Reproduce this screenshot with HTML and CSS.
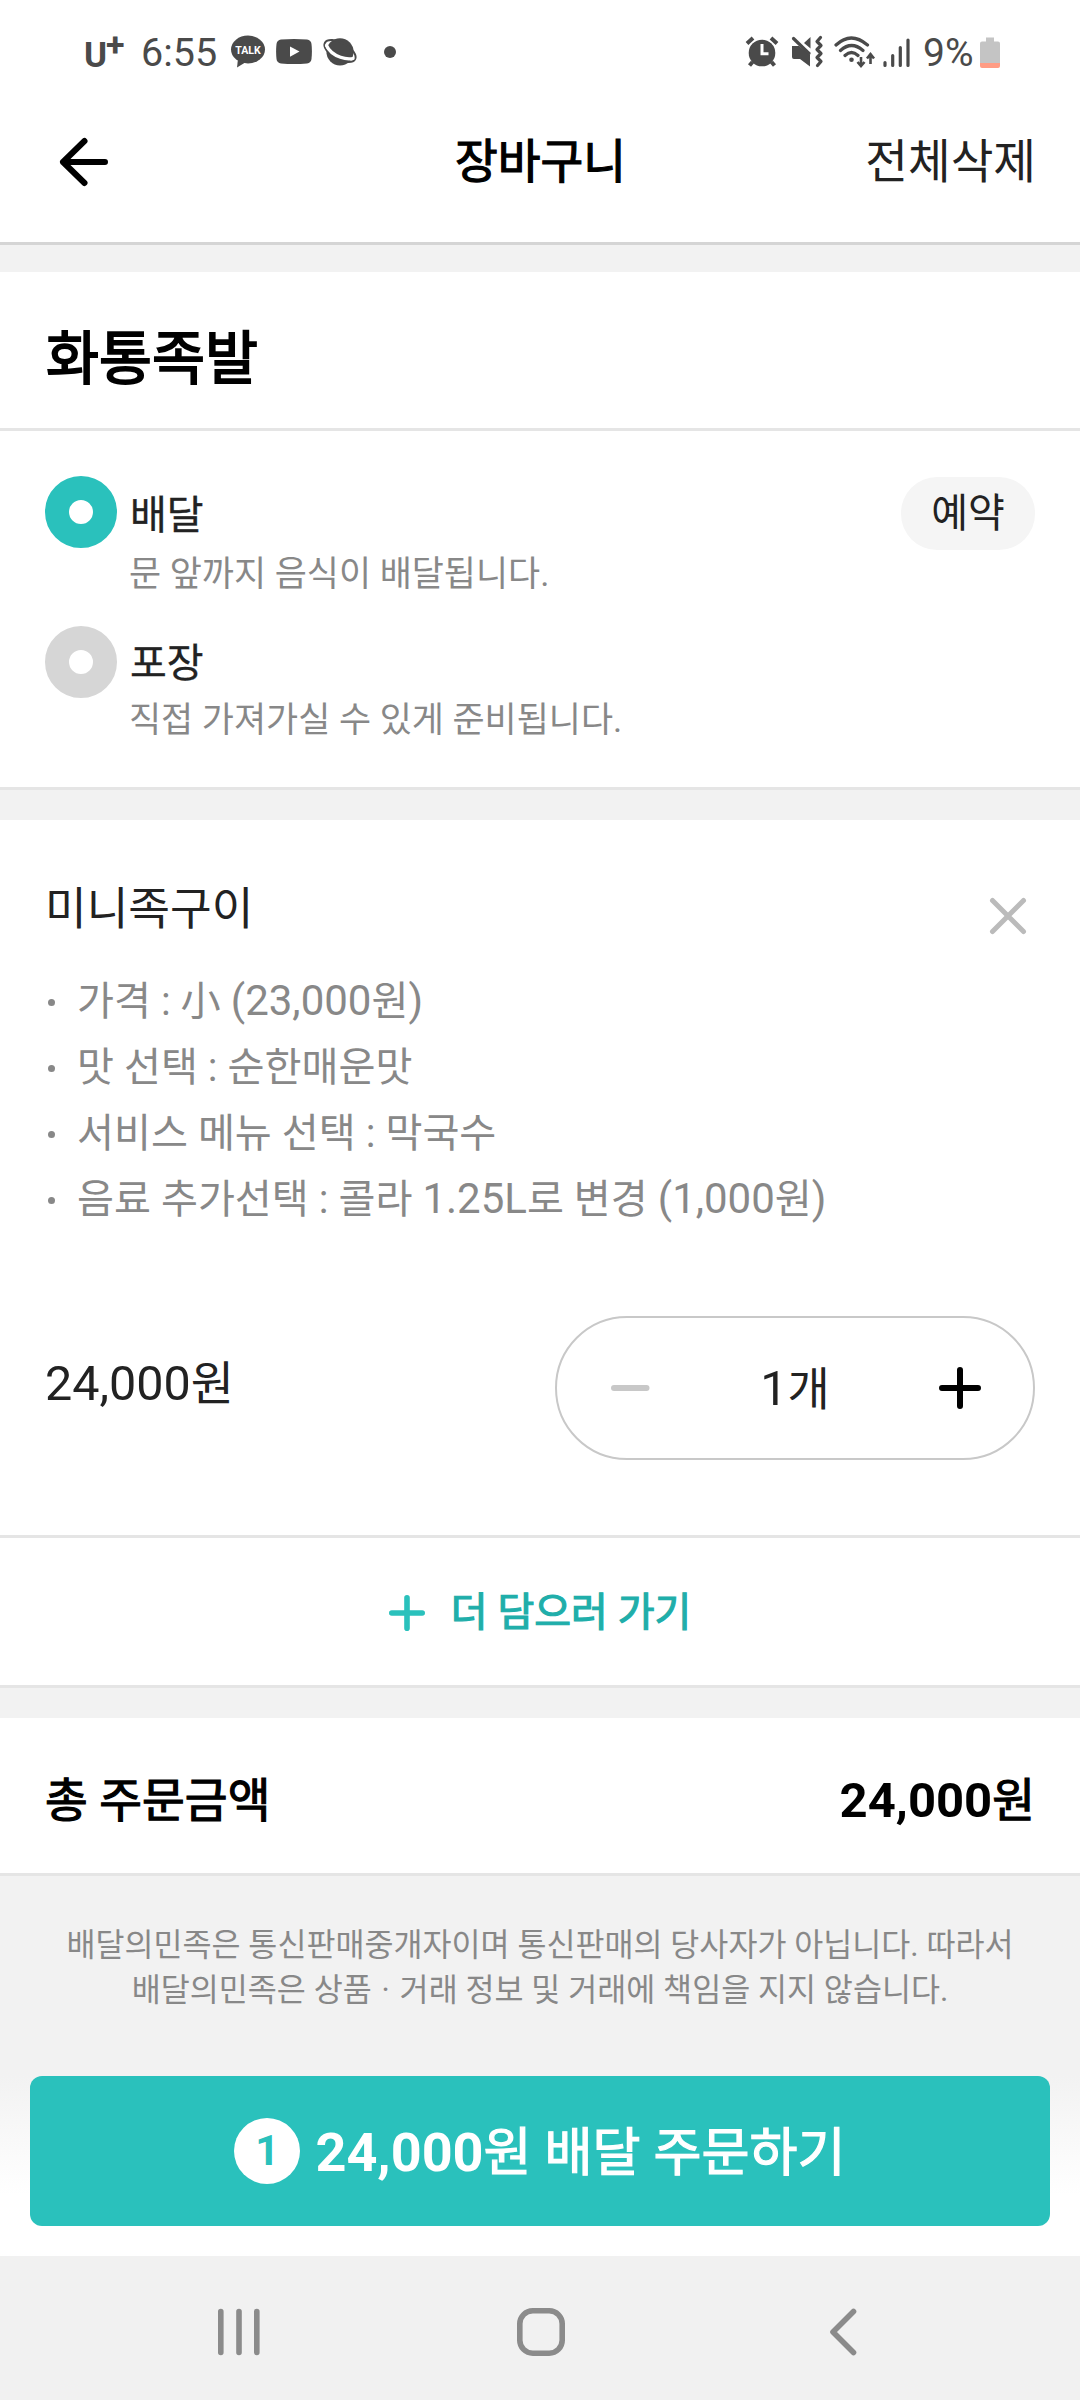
FILE: index.html
```html
<!DOCTYPE html>
<html lang="ko">
<head>
<meta charset="utf-8">
<title>장바구니</title>
<link rel="stylesheet" href="styles.css">
</head>
<body>
<div class="screen">
  <div class="status">
    <div class="status-left">
      <span class="carrier">U</span><span class="carrier-plus">+</span>
      <span class="clock">6:55</span>
      <svg class="ic-talk" width="36" height="36" viewBox="0 0 36 36">
        <ellipse cx="18" cy="15.500" rx="17" ry="13.900"/>
        <path d="M8 25 L7 33.500 L16 28 Z"/>
        <text class="talk-text" x="18" y="20" text-anchor="middle" textLength="25.5" lengthAdjust="spacingAndGlyphs">TALK</text>
      </svg>
      <svg class="ic-tube" width="36" height="36" viewBox="0 0 36 36">
        <path d="M5 5.500 Q18 4.500 31 5.500 Q35 6 35.500 10 Q36.300 17.500 35.500 25 Q35 29 31 29.400 Q18 30.500 5 29.400 Q1 29 .5 25 Q-.3 17.500 .5 10 Q1 6 5 5.500Z"/>
        <path class="cut" d="M14 12.500 L23.500 17.600 L14 22.700Z"/>
      </svg>
      <svg class="ic-planet" width="36" height="36" viewBox="0 0 36 36">
        <circle cx="18" cy="17.800" r="13.600"/>
        <ellipse class="ring" cx="18" cy="17" rx="17.200" ry="8.400" transform="rotate(29 18 17)"/>
        <path class="ring-shine" d="M4.500 11.500 Q8 19.500 18.500 23.300 Q25 25.600 31 24.500"/>
      </svg>
      <span class="more-dot"></span>
    </div>
    <div class="status-right">
      <svg class="ic-alarm" width="34" height="34" viewBox="0 0 34 34">
        <circle cx="17" cy="18" r="13.300"/>
        <path class="ln4" d="M2 8.500 L8 3 M32 8.500 L26 3"/>
        <path class="ln4" d="M7.500 27 L4.500 30.500 M26.500 27 L29.500 30.500"/>
        <path class="cutline" d="M17 9 V18.800 H23.500"/>
      </svg>
      <svg class="ic-mute" width="34" height="34" viewBox="0 0 34 34">
        <path d="M2 11 H9 L20 20 V31.500 L10 24 H4 Q2 24 2 22Z"/>
        <path d="M14 8 L20.500 2 V13.500Z"/>
        <path class="ln3" d="M3.500 3.500 L19 18.500"/>
        <path class="ln3" d="M30.500 2.500 L27 6.500 L31 10.500 L27 14.500 L31 18.500 L27 22.500 L31 26.500 L27.500 30.500"/>
      </svg>
      <svg class="ic-wifi" width="42" height="34" viewBox="0 0 42 34">
        <path class="ln3" d="M2 10 Q17 -4 33.500 10 M6.500 15.500 Q17.500 5.500 29 15.500 M11 20.500 Q17.500 14.500 24 20.500"/>
        <circle cx="17.500" cy="24.800" r="2.300"/>
        <path class="ln2" d="M27 22 V30 M23.500 27 L27 31 L30.500 27 M36.500 29 V20 M33 23.500 L36.500 19 L40 23.500"/>
      </svg>
      <svg class="ic-signal" width="28" height="34" viewBox="0 0 28 34">
        <path class="ln3" d="M2 27.500 V30.500 M9.700 20.500 V30.500 M17.300 12.500 V30.500 M25 5 V30.500"/>
      </svg>
      <span class="percent">9%</span>
      <svg class="ic-battery" width="20" height="34" viewBox="0 0 20 34">
        <path class="cell" d="M6 2.500 H14 V6.500 H18 Q20 6.500 20 8.500 V29 H0 V8.500 Q0 6.500 2 6.500 H6Z"/>
        <path class="low" d="M0 28 H20 V31 Q20 33 18 33 H2 Q0 33 0 31Z"/>
      </svg>
    </div>
  </div>

  <header class="header">
    <svg class="back" width="52" height="52" viewBox="0 0 52 52">
      <path d="M5 26 H47 M26.500 5 L5 26 L26.500 47"/>
    </svg>
    <h1 class="header-title">장바구니</h1>
    <span class="clear-all">전체삭제</span>
  </header>
  <div class="band band-top"></div>

  <section class="store">화통족발</section>

  <section class="methods">
    <div class="method">
      <span class="radio radio-on"></span>
      <div class="method-text">
        <div class="method-name">배달</div>
        <div class="method-desc">문 앞까지 음식이 배달됩니다.</div>
      </div>
      <span class="chip">예약</span>
    </div>
    <div class="method method-pickup">
      <span class="radio"></span>
      <div class="method-text">
        <div class="method-name">포장</div>
        <div class="method-desc">직접 가져가실 수 있게 준비됩니다.</div>
      </div>
    </div>
  </section>
  <div class="band"></div>

  <section class="item">
    <div class="item-head">
      <h2 class="item-name">미니족구이</h2>
      <svg class="remove" width="40" height="40" viewBox="0 0 40 40"><path d="M4.500 4.500 L35.500 35.500 M35.500 4.500 L4.500 35.500"/></svg>
    </div>
    <ul class="options">
      <li><p>가격 : 小 <span class="num">(23,000</span>원<span class="num">)</span></p></li>
      <li><p>맛 선택 : 순한매운맛</p></li>
      <li><p>서비스 메뉴 선택 : 막국수</p></li>
      <li><p>음료 추가선택 : 콜라 <span class="num">1.25L</span>로 변경 <span class="num">(1,000</span>원<span class="num">)</span></p></li>
    </ul>
    <div class="item-foot">
      <span class="item-price"><span class="price-num">24,000</span>원</span>
      <div class="stepper">
        <svg width="42" height="42" viewBox="0 0 42 42"><path class="minus" d="M5 21 H37.500"/></svg>
        <span class="count"><span class="price-num">1</span>개</span>
        <svg width="42" height="42" viewBox="0 0 42 42"><path class="plus" d="M3 21 H39 M21 3 V39"/></svg>
      </div>
    </div>
  </section>

  <section class="add-more">
    <svg width="36" height="36" viewBox="0 0 36 36"><path d="M2.800 18 H33.200 M18 2.800 V33.200"/></svg>
    <span class="heavy">더 담으러 가기</span>
  </section>
  <div class="band"></div>

  <section class="total">
    <span class="heavy">총 주문금액</span>
    <span class="total-price"><b>24,000</b><span class="heavy">원</span></span>
  </section>

  <section class="notice">
    배달의민족은 통신판매중개자이며 통신판매의 당사자가 아닙니다. 따라서<br>배달의민족은 상품 <span class="middot">·</span> 거래 정보 및 거래에 책임을 지지 않습니다.
  </section>

  <div class="order-bar">
    <div class="order">
      <span class="badge">1</span>
      <span class="order-text"><b>24,000</b><span class="heavy">원 배달 주문하기</span></span>
    </div>
  </div>

  <nav class="nav">
    <svg width="48" height="52" viewBox="0 0 48 52"><path d="M5.800 5.500 V46.500 M24 5.500 V46.500 M41.800 5.500 V46.500"/></svg>
    <svg width="52" height="52" viewBox="0 0 52 52"><rect x="4.800" y="4.800" width="42.400" height="42.400" rx="13"/></svg>
    <svg width="48" height="52" viewBox="0 0 48 52"><path d="M35.500 5.500 L15 26 L35.500 46.500"/></svg>
  </nav>
</div>
</body>
</html>
```
FILE: styles.css
```css
* { box-sizing: border-box; }

body {
  margin: 0;
  background: #fff;
  color: #222;
  font-family: Roboto, "Noto Sans CJK KR", sans-serif;
}

h1, h2, p, ul { margin: 0; padding: 0; font-weight: 400; }
svg { display: block; flex: none; }
b { font-weight: 700; }

.screen {
  width: 1080px;
  height: 2400px;
  display: flex;
  flex-direction: column;
  overflow: hidden;
}

/* status bar */
.status {
  height: 104px;
  padding: 0 80px 0 84px;
  display: flex;
  justify-content: space-between;
  align-items: center;
  color: #4a4a4a;
  fill: #4a4a4a;
}
.status-left, .status-right { display: flex; align-items: center; }
.carrier { width: 22px; padding-top: 8px; font-size: 35px; font-weight: 700; line-height: 40px; }
.carrier-plus { width: 35px; margin-top: -16px; font-size: 34px; font-weight: 700; line-height: 40px; }
.clock { width: 89px; padding-top: 2px; font-size: 39.5px; line-height: 44px; }
.ic-tube { margin-left: 10px; }
.ic-planet { margin-left: 10px; }
.talk-text { font: 700 11.3px Roboto, sans-serif; fill: #fff; }
.cut { fill: #fff; }
.ring { fill: none; stroke: #4a4a4a; stroke-width: 2; }
.ring-shine { fill: none; stroke: #fff; stroke-width: 3.2; stroke-linecap: round; }
.more-dot { width: 12px; height: 12px; margin-left: 26px; border-radius: 50%; background: #4a4a4a; }
.ln4 { fill: none; stroke: #4a4a4a; stroke-width: 4; }
.ln3 { fill: none; stroke: #4a4a4a; stroke-width: 3.2; stroke-linecap: round; stroke-linejoin: round; }
.ln2 { fill: none; stroke: #4a4a4a; stroke-width: 2.6; }
.cutline { fill: none; stroke: #fff; stroke-width: 3; }
.ic-mute { margin-left: 11px; }
.ic-wifi { margin-left: 10px; }
.ic-signal { margin-left: 7px; }
.percent { width: 57px; margin-left: 12px; padding-top: 2px; font-size: 39px; line-height: 44px; }
.cell { fill: #c4c4c4; }
.low { fill: #ff9c84; }

/* title bar */
.header {
  height: 141px;
  padding: 0 44px 23px 58px;
  border-bottom: 3px solid #d5d5d5;
  display: grid;
  grid-template-columns: 187px 1fr 200px;
  align-items: center;
  color: #222;
}
.back { fill: none; stroke: #000; stroke-width: 6; stroke-linecap: round; stroke-linejoin: round; }
.header-title { font-size: 46.5px; line-height: 60px; text-align: center; color: #000; -webkit-text-stroke: 1.2px; }
.clear-all { font-size: 46.4px; line-height: 60px; text-align: right; }

.band { height: 30px; flex: none; background: #f2f2f2; }
.band-top { height: 27px; }
.heavy { -webkit-text-stroke: 1.2px; }

.store {
  height: 159px;
  padding: 0 46px;
  border-bottom: 3px solid #e5e5e5;
  font-size: 57.6px;
  line-height: 176px;
  color: #000;
  -webkit-text-stroke: 1.8px;
}

/* delivery or pickup */
.methods { height: 359px; padding: 45px 45px 0; border-bottom: 3px solid #e5e5e5; }
.method { height: 150px; display: flex; align-items: flex-start; }
.radio { flex: none; width: 72px; height: 72px; border: 24px solid #d6d6d6; border-radius: 50%; }
.radio-on { border-color: #2ac1bc; }
.method-text { flex: 1; margin-left: 12px; }
.method-name { padding: 10px 0 0 1px; font-size: 40px; line-height: 60px; -webkit-text-stroke: .3px; }
.method-desc { padding-top: 4px; font-size: 34.9px; line-height: 50px; color: #888; }
.method-pickup .method-name { padding-top: 8px; }
.method-pickup .method-desc { padding-top: 2px; }
.chip { width: 134px; height: 73px; margin-top: 1px; border-radius: 36px; background: #f5f5f5; font-size: 40px; line-height: 74px; text-align: center; }

/* cart item */
.item { height: 718px; padding: 60px 45px 0; border-bottom: 3px solid #e5e5e5; }
.item-head { height: 89px; display: flex; justify-content: space-between; }
.item-name { font-size: 45.3px; line-height: 60px; }
.remove { margin: 16px 7px 0 0; fill: none; stroke: #bbb; stroke-width: 5; stroke-linecap: round; }
.options { list-style: none; font-size: 40.2px; line-height: 66px; color: #888; }
.options li { height: 66px; display: flex; align-items: center; white-space: nowrap; }
.options li::before { content: ""; width: 7px; height: 7px; margin: 0 22px 0 3px; border-radius: 50%; background: #888; }
.num { font-size: 42px; line-height: 1; }
.item-foot { margin-top: 83px; display: flex; justify-content: space-between; }
.item-price { font-size: 47px; line-height: 136px; }
.price-num { font-size: 48.5px; line-height: 1; }
.stepper {
  width: 480px;
  height: 144px;
  padding: 0 52px;
  border: 2px solid #c8c8c8;
  border-radius: 72px;
  display: flex;
  justify-content: space-between;
  align-items: center;
}
.count { padding-top: 2px; font-size: 46px; line-height: 60px; }
.minus { stroke: #c8c8c8; stroke-width: 6; stroke-linecap: round; }
.plus { stroke: #000; stroke-width: 6; stroke-linecap: round; }

.add-more {
  height: 150px;
  padding-top: 3px;
  border-bottom: 3px solid #e5e5e5;
  display: flex;
  justify-content: center;
  align-items: center;
  gap: 26px;
  font-size: 40px;
  line-height: 60px;
  color: #20aeaa;
}
.add-more svg { stroke: #2ac1bc; stroke-width: 5.6; stroke-linecap: round; }

.total {
  height: 158px;
  padding: 10px 45px 0;
  border-bottom: 3px solid #e5e5e5;
  display: flex;
  justify-content: space-between;
  align-items: center;
  font-size: 46.5px;
  line-height: 60px;
  color: #000;
}
.total-price b { font-size: 49px; line-height: 1; }

.notice {
  height: 200px;
  padding-top: 47px;
  background: #f2f2f2;
  font-size: 31.55px;
  line-height: 45px;
  text-align: center;
  color: #888;
}
.middot { padding: 0 2px; }

/* order button */
.order-bar { height: 180px; padding: 0 30px; background: linear-gradient(#f2f2f2, #fff 66%); }
.order {
  height: 150px;
  border-radius: 12px;
  background: #2ac1bc;
  color: #fff;
  display: flex;
  justify-content: center;
  align-items: center;
  gap: 15px;
  font-size: 52.2px;
  line-height: 70px;
}
.badge { width: 66px; height: 66px; border-radius: 50%; background: #fff; color: #2ac1bc; font-size: 42px; font-weight: 700; line-height: 66px; text-align: center; }
.order-text { padding-top: 6px; }
.order-text b { font-size: 54px; line-height: 1; }

/* system navigation */
.nav { flex: 1; padding: 8px 214px 0 215px; background: #f1f1f1; display: flex; justify-content: space-between; align-items: center; }
.nav svg { fill: none; stroke: #8b8b8b; stroke-width: 5.6; stroke-linecap: round; stroke-linejoin: round; }
```
